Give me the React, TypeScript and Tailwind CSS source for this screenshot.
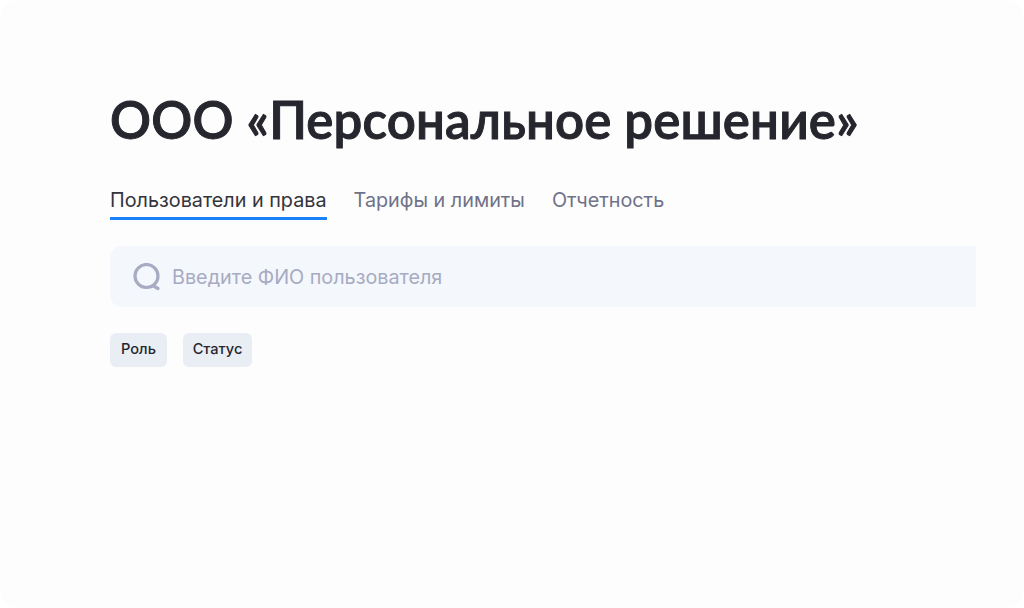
export default function App() {
  return (
    <div className="h-[608px] w-[1024px] overflow-hidden bg-white font-['Inter','Noto_Sans',sans-serif]">
      <div className="flex h-full flex-col rounded-[20px] bg-[#fdfdfd] pl-[110px] pr-[48px] pt-[88px]">
        <h1 className="h-[64px] font-['Lato','Noto_Sans',sans-serif] text-[51px] font-semibold leading-[64px] tracking-[0.16px] text-[#26262e] whitespace-nowrap [-webkit-text-stroke:1px_#26262e]">
          ООО «Персональное решение»
        </h1>
        <div className="mt-[32px] flex h-[34px] gap-[27px] text-[19.8px] leading-[33px] text-[#6f7288]">
          <div className="h-[36px] border-b-[3px] border-[#1a82f7] text-[#33343c]">Пользователи и права</div>
          <div>Тарифы и лимиты</div>
          <div>Отчетность</div>
        </div>
        <div className="mt-[28px] flex h-[61px] items-center gap-[11px] rounded-l-[12px] bg-[#f4f7fb] pl-[23px]">
          <svg width="28" height="28" viewBox="0 0 28 28" fill="none" stroke="#a7abc3" strokeWidth="3.2" strokeLinecap="round">
            <circle cx="13.5" cy="13" r="11.5" />
            <path d="M20.5 23 L25 25.5" />
          </svg>
          <span className="pt-[2px] text-[19.8px] text-[#a7abc3]">Введите ФИО пользователя</span>
        </div>
        <div className="mt-[26px] flex gap-[16px]">
          <div className="flex h-[34px] w-[57px] items-center justify-center rounded-[6px] bg-[#e9edf4] text-[14.6px] font-medium text-[#26262e]">Роль</div>
          <div className="flex h-[34px] w-[69px] items-center justify-center rounded-[6px] bg-[#e9edf4] text-[14.6px] font-medium text-[#26262e]">Статус</div>
        </div>
      </div>
    </div>
  );
}
